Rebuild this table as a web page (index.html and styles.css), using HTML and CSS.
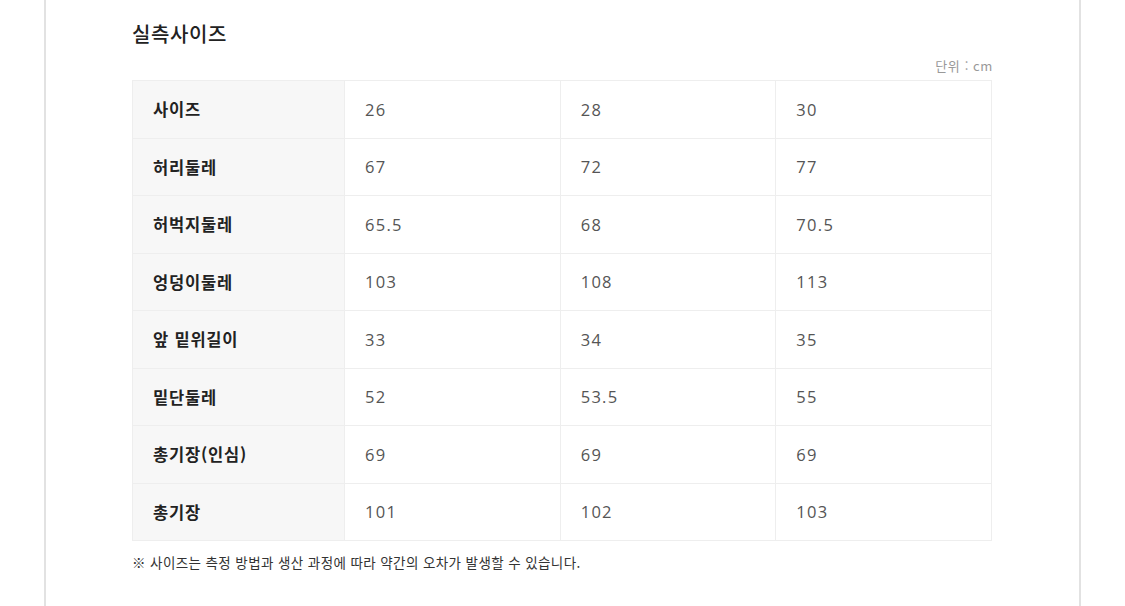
FILE: index.html
```html
<!DOCTYPE html>
<html lang="ko">
<head>
<meta charset="utf-8">
<link rel="stylesheet" href="styles.css">
</head>
<body>
<div class="frame">
  <h2 class="title">실측사이즈</h2>
  <div class="unit">단위 : cm</div>
  <table class="size">
    <tr><th>사이즈</th><td>26</td><td>28</td><td>30</td></tr>
    <tr><th>허리둘레</th><td>67</td><td>72</td><td>77</td></tr>
    <tr><th>허벅지둘레</th><td>65.5</td><td>68</td><td>70.5</td></tr>
    <tr><th>엉덩이둘레</th><td>103</td><td>108</td><td>113</td></tr>
    <tr><th>앞 밑위길이</th><td>33</td><td>34</td><td>35</td></tr>
    <tr><th>밑단둘레</th><td>52</td><td>53.5</td><td>55</td></tr>
    <tr><th>총기장(인심)</th><td>69</td><td>69</td><td>69</td></tr>
    <tr><th>총기장</th><td>101</td><td>102</td><td>103</td></tr>
  </table>
  <p class="note">※ 사이즈는 측정 방법과 생산 과정에 따라 약간의 오차가 발생할 수 있습니다.</p>
</div>
</body>
</html>
```
FILE: styles.css
```css
html, body {
  margin: 0;
  padding: 0;
  background: #fff;
  font-family: "Noto Sans CJK KR", "Noto Sans", sans-serif;
}
.frame {
  margin-left: 44px;
  width: 1037px;
  height: 606px;
  border-left: 2px solid #e2e2e2;
  border-right: 2px solid #e2e2e2;
  padding: 0 87px 0 86px;
  box-sizing: border-box;
}
.title {
  margin: 0;
  padding-top: 20px;
  font-size: 20px;
  letter-spacing: 0.6px;
  font-weight: 500;
  color: #222;
  line-height: 28px;
}
.unit {
  text-align: right;
  font-size: 13px;
  letter-spacing: 0.6px;
  color: #999;
  line-height: 16px;
  margin-top: 10px;
  margin-bottom: 6px;
  margin-right: -1px;
}
.size {
  width: 100%;
  border-collapse: collapse;
  table-layout: fixed;
  border: 1px solid #ececec;
}
.size th, .size td {
  border: 1px solid #eeeeee;
  height: 56.5px;
  padding: 0 0 0 20px;
  text-align: left;
}
.size th {
  width: 191px;
  background: #f7f7f7;
  color: #222;
  font-weight: 700;
  font-size: 16.5px;
  letter-spacing: 0.8px;
}
.size td {
  color: #555;
  font-family: "Open Sans", "Noto Sans CJK KR", sans-serif;
  font-weight: 400;
  font-size: 16.5px;
  letter-spacing: 1.3px;
}
.note {
  margin: 12px 0 0;
  font-size: 13.5px;
  letter-spacing: 0.4px;
  color: #333;
  line-height: 18px;
}
```
